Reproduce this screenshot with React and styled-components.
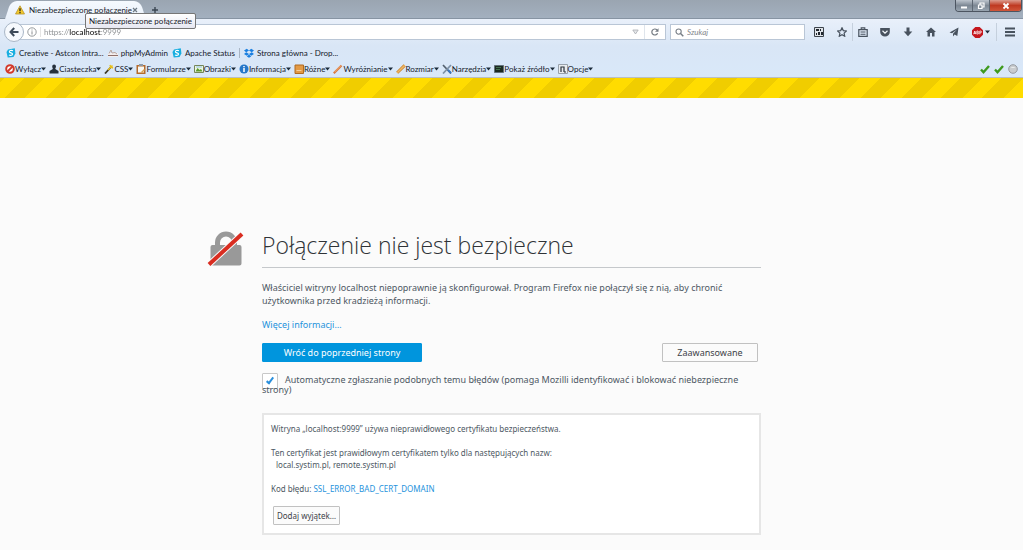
import React from 'react';
import styled, { createGlobalStyle, css } from 'styled-components';

const Global = createGlobalStyle`
  *, *::before, *::after { box-sizing: border-box; }
  body { margin: 0; background: #fbfbfb; font-family: "Noto Sans", "Open Sans", sans-serif; color: #4d5863; }
  button, input { font-family: inherit; }
  a { text-decoration: none; }
  h1, p { margin: 0; }
  svg { display: block; flex: none; }
`;

const Chrome = styled.header`
  background: linear-gradient(#e9f0fa 19px, #d9e6f6 46px, #d9e8f9);
  border-bottom: 1px solid #b9bfc4;
  font-family: "Lato", "Noto Sans", sans-serif;
  font-size: 8px;
  color: #15202b;
`;

const TitleBar = styled.div`
  display: flex;
  justify-content: space-between;
  height: 19px;
  background: linear-gradient(#9aa5b1, #a3b0bf);
  border-bottom: 1px solid #8794a3;
`;

const Tabs = styled.div`
  display: flex;
  align-items: flex-start;
  gap: 6px;
  padding: 1px 0 0 8px;
`;

const Tab = styled.div`
  position: relative;
  z-index: 0;
  display: flex;
  align-items: center;
  gap: 4px;
  width: 135px;
  height: 18px;
  padding: 0 5px 0 7px;
  white-space: nowrap;

  &::before,
  &::after {
    content: '';
    position: absolute;
    z-index: -1;
    top: 0;
    bottom: 0;
    width: 55%;
    background: linear-gradient(#f5f9fe, #e9f0fa);
  }
  &::before {
    left: 0;
    border-radius: 6px 0 0 0;
    transform: skewX(-18deg);
  }
  &::after {
    right: 0;
    border-radius: 0 6px 0 0;
    transform: skewX(18deg);
  }
`;

const TabTitle = styled.span`
  flex: 1;
  min-width: 0;
`;

const Tooltip = styled.div`
  position: absolute;
  top: 12px;
  left: 77px;
  z-index: 2;
  height: 16px;
  padding: 0 3px;
  border: 1px solid #767676;
  border-radius: 2px;
  background: linear-gradient(#fff, #e6e7f1);
  line-height: 14px;
  white-space: nowrap;
`;

const PlainButton = styled.button`
  display: flex;
  align-items: center;
  justify-content: center;
  flex: none;
  padding: 0;
  border: 0;
  background: none;
  color: inherit;
  font-size: inherit;
`;

const NewTabButton = styled(PlainButton)`
  width: 12px;
  height: 18px;
  color: #3b4652;
`;

const WindowButtons = styled.div`
  display: flex;
  height: 12px;
  margin-right: 1px;
  border: 1px solid #4c5561;
  border-top: 0;
  border-radius: 0 0 4px 4px;
  overflow: hidden;
`;

const WindowButton = styled(PlainButton)`
  width: ${(p) => (p.$close ? 31 : 17)}px;
  border-right: ${(p) => (p.$close ? 0 : '1px solid #5d6773')};
  background: ${(p) =>
    p.$close
      ? 'linear-gradient(#dc9c8e, #bf3a22 50%, #d0563a)'
      : 'linear-gradient(#bcc4cd, #7d8894 50%, #98a4b0)'};
  color: #fff;
`;

const NavBar = styled.div`
  display: flex;
  align-items: center;
  height: 26px;
  padding-left: 4px;
`;

const BackButton = styled(PlainButton)`
  z-index: 1;
  width: 20px;
  height: 20px;
  border: 1px solid #a9b6c6;
  border-radius: 50%;
  background: #f6f9fd;
  color: #3e4a59;
`;

const Field = styled.div`
  display: flex;
  align-items: center;
  height: 16px;
  border: 1px solid #b9c6d6;
  background: #fff;
  color: #8a8d90;
`;

const UrlField = styled(Field)`
  flex: 1;
  min-width: 0;
  margin-left: -4px;
  padding-left: 6px;
`;

const UrlInput = styled.input`
  flex: 1;
  min-width: 0;
  height: 10px;
  margin-left: 3px;
  padding: 0 0 0 3px;
  border: 0;
  border-left: 1px solid #e4e4e4;
  outline: 0;
  background: linear-gradient(90deg, #8a8d90 28px, #000 28px 60px, #8a8d90 60px);
  background-clip: text;
  color: transparent;
  font-size: 8px;
`;

const ReloadButton = styled(PlainButton)`
  width: 21px;
  height: 14px;
  margin-left: 5px;
  border-left: 1px solid #dfe5ec;
`;

const SearchField = styled(Field)`
  width: 135px;
  margin-left: 4px;
  padding-left: 4px;
  gap: 3px;
`;

const SearchInput = styled.input`
  flex: 1;
  min-width: 0;
  padding: 0;
  border: 0;
  outline: 0;
  background: none;
  font-size: 8px;
  font-style: italic;
  &::placeholder { color: #85888c; opacity: 1; }
`;

const Tools = styled.div`
  display: flex;
  align-items: center;
  padding-left: 2px;
  color: #48525e;
`;

const ToolButton = styled(PlainButton)`
  width: ${(p) => p.$width || 23}px;
  height: 18px;
  gap: 2px;
  border-left: ${(p) => (p.$divided ? '1px solid #c5d0dd' : 0)};
`;

const Bookmarks = styled.nav`
  display: flex;
  align-items: center;
  height: 15px;
  padding: 0 6px;
  gap: 4px;
`;

const barItem = css`
  display: flex;
  align-items: center;
  white-space: nowrap;
  color: inherit;
`;

const Bookmark = styled.a`
  ${barItem}
  gap: 3px;
  padding-left: ${(p) => (p.$divided ? 4 : 0)}px;
  border-left: ${(p) => (p.$divided ? '1px solid #a9b5c4' : 0)};
`;

const DevBar = styled.div`
  display: flex;
  align-items: center;
  justify-content: space-between;
  height: 17px;
  padding: 0 5px;
`;

const DevMenus = styled.div`
  display: flex;
  gap: 3px;
`;

const DevMenu = styled.button`
  ${barItem}
  padding: 0;
  border: 0;
  background: none;
  font-size: 8px;
  line-height: 12px;
`;

const Status = styled.div`
  display: flex;
  align-items: center;
  gap: 4px;
`;

const stripeEdges = [0, 14, 29, 43, 58, 72, 86, 101, 115, 130, 144];
const stripeStops = stripeEdges
  .slice(1)
  .map((end, i) => `${i % 2 ? '#f0cd00' : '#ffdc00'} ${stripeEdges[i]}px ${end}px`)
  .join(', ');

const Stripes = styled.div`
  height: 20px;
  background: repeating-linear-gradient(-45deg, ${stripeStops});
`;

const Main = styled.main`
  display: grid;
  grid-template-columns: 1fr minmax(0, 499px) 1fr;
  padding: 133px 0 15px;
  font-size: 9px;
`;

const Emblem = styled.div`
  display: flex;
  justify-content: flex-end;
  padding-right: 18px;
`;

const Title = styled.h1`
  height: 37px;
  border-bottom: 1px solid #c5c8cb;
  font-family: "Open Sans", sans-serif;
  font-size: 23px;
  font-weight: 300;
  line-height: 28px;
  color: #2f3337;
  white-space: nowrap;
`;

const Lead = styled.p`
  margin-top: 13px;
  line-height: 13px;
`;

const More = styled.p`
  margin-top: 11px;
  line-height: 13px;
`;

const Link = styled.a`
  color: #1f93dc;
`;

const Actions = styled.div`
  display: flex;
  justify-content: space-between;
  margin-top: 12px;
  padding-right: 3px;
`;

const Button = styled.button`
  height: 19px;
  padding: 0 5px;
  min-width: ${(p) => p.$width || 0}px;
  border: 1px solid ${(p) => (p.$primary ? '#0095dd' : '#c1c1c1')};
  border-radius: 1px;
  background: ${(p) => (p.$primary ? '#0095dd' : '#fbfbfb')};
  color: ${(p) => (p.$primary ? '#fff' : '#3d4248')};
  font-size: 9px;
  line-height: 12px;
`;

const Report = styled.label`
  display: block;
  isolation: isolate;
  margin-top: 13px;
  line-height: 10px;
`;

const Checkbox = styled.input`
  appearance: none;
  position: relative;
  z-index: -1;
  width: 16px;
  height: 16px;
  margin: -2px 7px -4px 0;
  vertical-align: top;
  border: 1px solid #c8c8c8;
  border-radius: 1px;
  background: #fff;

  &:checked::after {
    content: '';
    position: absolute;
    top: 2px;
    left: 5px;
    width: 4px;
    height: 8px;
    border: solid #2a8fdc;
    border-width: 0 2px 2px 0;
    transform: rotate(38deg);
  }
`;

const Details = styled.section`
  margin-top: 18px;
  padding: 8px 7px 8px;
  border: 2px solid #e6e6e6;
  background: #fff;
  font-size: 8px;
  line-height: 12px;

  p + p { margin-top: 12px; }
`;

const Names = styled.span`
  display: block;
  padding-left: 5px;
`;

const ExceptionButton = styled(Button)`
  display: block;
  width: 67px;
  margin: 11px 0 0 2px;
  padding: 0;
  font-size: 8px;
`;

function Icon({ w = 10, h = 10, box = '0 0 10 10', children }) {
  return (
    <svg width={w} height={h} viewBox={box} fill="none" aria-hidden="true">
      {children}
    </svg>
  );
}

const Caret = () => (
  <Icon w={5} h={4} box="0 0 5 4"><path d="M0 .5h5L2.5 3.5z" fill="#1c2b3a" /></Icon>
);

const CreativeIcon = () => (
  <Icon>
    <path d="M2 1.5 8.8.3l.6 5.2L7.5 9 1.7 9.6.5 4z" fill="#17aee0" />
    <path d="M7 2.7C5 1.8 3 2.500 3.500 4c.4 1 3 .7 3 2S4.500 7.700 3 7" stroke="#fff" strokeWidth="1.200" />
  </Icon>
);

const bookmarks = [
  { label: 'Creative - Astcon Intra...', icon: <CreativeIcon /> },
  {
    label: 'phpMyAdmin',
    icon: (
      <Icon>
        <path d="M0 5h10v4H0z" fill="#f3eeee" />
        <path d="M1 5.500 3 2l1 3 3-.5L9 6" stroke="#b9a59e" />
        <path d="M0 7.500h10" stroke="#8d6f6a" />
      </Icon>
    ),
  },
  { label: 'Apache Status', icon: <CreativeIcon /> },
  {
    label: 'Strona główna - Drop...',
    divided: true,
    icon: (
      <Icon>
        <path d="M2.800.8 5 2.500 2.200 4.300 0 2.600zM7.200.8 10 2.600 7.800 4.300 5 2.500zM0 6l2.200-1.700L5 6 2.800 7.700zM7.800 4.300 10 6 7.200 7.700 5 6zM5 6.600l2.200 1.800L5 9.700 2.800 8.400z" fill="#1a7fe0" />
      </Icon>
    ),
  },
];

const devMenus = [
  ['Wyłącz', <><circle cx="5" cy="5" r="3.800" fill="#fff" stroke="#d33a2c" strokeWidth="2" /><path d="M2.500 7.500l5-5" stroke="#d33a2c" strokeWidth="1.800" /></>],
  ['Ciasteczka', <path d="M3.200 2.500a1.900 2 0 0 1 3.800 0c0 1.200-.7 1.500-.7 2.500L9.500 7v2.500h-9V7l3.300-2c0-1-.6-1.300-.6-2.500z" fill="#26313d" />],
  ['CSS', <><path d="M1 9.500 7.500 2.500" stroke="#3c3a2a" strokeWidth="1.800" /><path d="M4 6 8.500 1.500M6 1l.5 1.500M9 4 7.500 3.300" stroke="#e8bf1c" strokeWidth="1.500" /></>],
  ['Formularze', <><path d="M.5 1h9v9h-9z" fill="#b56b2c" /><path d="M2 2.500h6v6H2z" fill="#f7f7f2" /><path d="M3 0h4v2H3z" fill="#8d98a5" /><path d="m5 8 3-3 1 1-3 3z" fill="#d9a04a" /></>],
  ['Obrazki', <><path d="M.5 1.500h9v7h-9z" fill="#eef5df" stroke="#74875a" /><path d="M1.500 7.500 3.500 4l2 2 1.500-1 1.500 2.500z" fill="#5b9b2c" /><path d="M2 3h6" stroke="#8fc3e8" /></>],
  ['Informacja', <><circle cx="5" cy="5" r="4.500" fill="#2577c9" /><path d="M5 4v4M5 2v1.300" stroke="#fff" strokeWidth="1.500" /></>],
  ['Różne', <><path d="M1 1h8.500v8.500H1z" fill="#e39a45" stroke="#b06a22" /><path d="M2.500 6.500h5" stroke="#f6cf99" /></>],
  ['Wyróżnianie', <><path d="M.8 9.300 8.500 1.500" stroke="#d8743a" strokeWidth="2" /><path d="M1.500 8.200 8 1.500" stroke="#f6c48e" strokeWidth=".7" /></>],
  ['Rozmiar', <><path d="M1.200 8.800 8.700 1.400" stroke="#c9852f" strokeWidth="3" /><path d="M1.200 8.800 8.700 1.400" stroke="#f0b764" strokeWidth="1.500" /></>],
  ['Narzędzia', <><path d="m1 1 8 8.500" stroke="#53616f" strokeWidth="1.700" /><path d="M9 1 1 9.500" stroke="#7d91a6" strokeWidth="1.700" /><path d="m6 6 3 3" stroke="#3576c4" strokeWidth="2" /></>],
  ['Pokaż źródło', <><path d="M.5 1.500h9v7h-9z" fill="#1c2a20" stroke="#62707a" /><path d="M2 3.500h5M2 5.500h4" stroke="#4c8057" strokeWidth=".8" /></>],
  ['Opcje', <><path d="M.5.5h9v9h-9z" fill="#e9ecef" stroke="#98a1ab" /><path d="M3 8V3h3v5M6 8h2" stroke="#2b333c" strokeWidth="1.200" /></>],
];

const tools = [
  { name: 'Kod QR', width: 24, art: <><path d="M.5.5h9v9h-9z" fill="#dfe3e8" stroke="#3c434b" /><path d="M2 2h3v2H2zM6 2h1v2H6zM4 5h2v3H4zM7 5h2v3H7zM2 6h1v2H2z" fill="#20262d" /></> },
  { name: 'Dodaj zakładkę', width: 21, art: <path d="m5 .8 1.300 2.800 3.100.4-2.300 2.100.6 3.100L5 7.700 2.300 9.200l.6-3.100L.6 4l3.100-.4z" stroke="currentColor" strokeWidth="1.200" /> },
  { name: 'Zakładki', width: 21, divided: true, art: <><path d="M.8 2.700h8.400v6.600H.8z" stroke="currentColor" strokeWidth="1.200" /><path d="M3.200 2.500V.9h3.600v1.600M2.500 5h5M2.500 7.200h5" stroke="currentColor" strokeWidth="1.100" /></> },
  { name: 'Pocket', art: <><path d="M.2 1h9.600v4a4.800 4.500 0 0 1-9.600 0z" fill="currentColor" /><path d="M2.500 3.800 5 6.100l2.500-2.300" stroke="#f2f6fb" strokeWidth="1.200" /></> },
  { name: 'Pobrane', art: <path d="M3.500.5h3v4h2.800L5 9.200.7 4.500h2.800z" fill="currentColor" /> },
  { name: 'Strona startowa', art: <path d="M5 .5 10 5H8.500v4.500h-2.500V6H4v3.500H1.500V5H0z" fill="currentColor" /> },
  { name: 'Wyślij', art: <path d="M9.500.5 8.300 9 5.600 7.500 4 9.500V6.800L8 2.500 3 6.300.5 5.500z" fill="currentColor" /> },
];

const Check = () => (
  <Icon><path d="m1 5.500 2.500 2.700L9 2" stroke="#3f9a1e" strokeWidth="2.400" /></Icon>
);

export default function App() {
  return (
    <>
      <Global />
      <Chrome>
        <TitleBar>
          <Tabs>
            <Tab>
              <Icon>
                <path d="M5 .8 9.500 9H.5z" fill="#f4c92a" stroke="#b9962c" strokeWidth=".8" strokeLinejoin="round" />
                <path d="M5 3.200v3M5 7v1.200" stroke="#222" strokeWidth="1.300" />
              </Icon>
              <TabTitle>Niezabezpieczone połączenie</TabTitle>
              <PlainButton aria-label="Zamknij kartę">
                <Icon w={6} h={6} box="0 0 6 6"><path d="m1 1 4 4m0-4L1 5" stroke="#6d7883" strokeWidth="1.200" /></Icon>
              </PlainButton>
              <Tooltip role="tooltip">Niezabezpieczone połączenie</Tooltip>
            </Tab>
            <NewTabButton aria-label="Nowa karta">
              <Icon w={8} h={8} box="0 0 8 8"><path d="M4 1v6M1 4h6" stroke="currentColor" strokeWidth="1.400" /></Icon>
            </NewTabButton>
          </Tabs>
          <WindowButtons>
            <WindowButton aria-label="Minimalizuj">
              <Icon w={8} h={8} box="0 0 8 8"><path d="M1 5.500h6" stroke="currentColor" strokeWidth="2" /></Icon>
            </WindowButton>
            <WindowButton aria-label="Przywróć">
              <Icon w={8} h={8} box="0 0 8 8"><path d="M3 2.500V1h4v4H5.500M1.500 3h3.500v3.500H1.500z" stroke="currentColor" strokeWidth="1.200" /></Icon>
            </WindowButton>
            <WindowButton $close aria-label="Zamknij">
              <Icon w={8} h={8} box="0 0 8 8"><path d="m1.500 1.500 5 5m0-5-5 5" stroke="currentColor" strokeWidth="1.800" /></Icon>
            </WindowButton>
          </WindowButtons>
        </TitleBar>

        <NavBar>
          <BackButton aria-label="Wstecz">
            <Icon><path d="M5.200 1 1.500 5l3.700 4M1.500 5h8" stroke="currentColor" strokeWidth="2" /></Icon>
          </BackButton>
          <UrlField>
            <Icon>
              <circle cx="5" cy="5" r="4.200" stroke="#8b8e92" strokeWidth=".9" />
              <path d="M5 4.300v3.200M5 2.500v1" stroke="#8b8e92" />
            </Icon>
            <UrlInput aria-label="Adres" defaultValue="https://localhost:9999" />
            <Icon w={7} h={6} box="0 0 7 6"><path d="M.8 1h5.400L3.500 5z" fill="#e5e7ea" stroke="#a9adb2" strokeWidth=".8" /></Icon>
            <ReloadButton aria-label="Odśwież">
              <Icon w={8} h={8} box="0 0 8 8"><path d="M6.600 5.200A3 3 0 1 1 6 1.900" stroke="#737a82" strokeWidth="1.200" /><path d="M7.500.3v3.500H4z" fill="#737a82" /></Icon>
            </ReloadButton>
          </UrlField>
          <SearchField>
            <Icon w={9} h={9}><circle cx="4" cy="4" r="2.900" stroke="#777e86" strokeWidth="1.200" /><path d="m6.200 6.200 3 3" stroke="#777e86" strokeWidth="1.600" /></Icon>
            <SearchInput aria-label="Szukaj" placeholder="Szukaj" />
          </SearchField>
          <Tools>
            {tools.map((t) => (
              <ToolButton key={t.name} aria-label={t.name} $width={t.width} $divided={t.divided}>
                <Icon>{t.art}</Icon>
              </ToolButton>
            ))}
            <ToolButton aria-label="Adblock Plus" $width={31}>
              <Icon w={11} h={11} box="0 0 11 11">
                <path d="M3.300 0h4.400L11 3.300v4.400L7.700 11H3.300L0 7.700V3.300z" fill="#c5161d" />
                <path d="M1.700 7.200 2.800 4l1.100 3.200M2 6.300h1.600M4.900 4v3h.8c1.200 0 1.200-1.500 0-1.500.9 0 .9-1.500 0-1.500zM7.800 7.300V4h.7c1.300 0 1.300 1.800 0 1.800h-.7" stroke="#fff" strokeWidth=".8" />
              </Icon>
              <Caret />
            </ToolButton>
            <ToolButton aria-label="Menu" $width={27} $divided>
              <Icon><path d="M0 1.500h10M0 5h10M0 8.500h10" stroke="currentColor" strokeWidth="1.800" /></Icon>
            </ToolButton>
          </Tools>
        </NavBar>

        <Bookmarks>
          {bookmarks.map((b) => (
            <Bookmark key={b.label} href="#" $divided={b.divided}>
              {b.icon}
              {b.label}
            </Bookmark>
          ))}
        </Bookmarks>

        <DevBar>
          <DevMenus>
            {devMenus.map(([label, art]) => (
              <DevMenu key={label}>
                <Icon>{art}</Icon>
                {label}
                <Caret />
              </DevMenu>
            ))}
          </DevMenus>
          <Status>
            <Check />
            <Check />
            <Icon><circle cx="5" cy="5" r="4.300" fill="#c9cccf" stroke="#8e9398" strokeWidth=".9" /><path d="M2.500 4a3 2.200 0 0 1 5 0z" fill="#eceeef" /></Icon>
          </Status>
        </DevBar>
      </Chrome>

      <Stripes />

      <Main>
        <Emblem>
          <Icon w={37} h={37} box="0 0 37 37">
            <path d="M10.500 16v-4.500a8.500 8.500 0 0 1 17 0V16" stroke="#999" strokeWidth="5" />
            <path d="M5.500 14h27a2 2 0 0 1 2 2v16.500a2 2 0 0 1-2 2h-27a2 2 0 0 1-2-2V16a2 2 0 0 1 2-2z" fill="#999" />
            <path d="M2 33.500 35 3" stroke="#fbfbfb" strokeWidth="6" />
            <path d="M2 33.500 35 3" stroke="#d92d21" strokeWidth="4" />
          </Icon>
        </Emblem>
        <div>
          <Title>Połączenie nie jest bezpieczne</Title>
          <Lead>
            Właściciel witryny localhost niepoprawnie ją skonfigurował. Program Firefox nie połączył się z nią, aby chronić
            użytkownika przed kradzieżą informacji.
          </Lead>
          <More><Link href="#">Więcej informacji…</Link></More>
          <Actions>
            <Button $primary $width={160}>Wróć do poprzedniej strony</Button>
            <Button $width={96}>Zaawansowane</Button>
          </Actions>
          <Report>
            <Checkbox type="checkbox" defaultChecked />
            Automatyczne zgłaszanie podobnych temu błędów (pomaga Mozilli identyfikować i blokować niebezpieczne strony)
          </Report>
          <Details>
            <p>Witryna „localhost:9999” używa nieprawidłowego certyfikatu bezpieczeństwa.</p>
            <p>
              Ten certyfikat jest prawidłowym certyfikatem tylko dla następujących nazw:
              <Names>local.systim.pl, remote.systim.pl</Names>
            </p>
            <p>Kod błędu: <Link href="#">SSL_ERROR_BAD_CERT_DOMAIN</Link></p>
            <ExceptionButton>Dodaj wyjątek…</ExceptionButton>
          </Details>
        </div>
      </Main>
    </>
  );
}
